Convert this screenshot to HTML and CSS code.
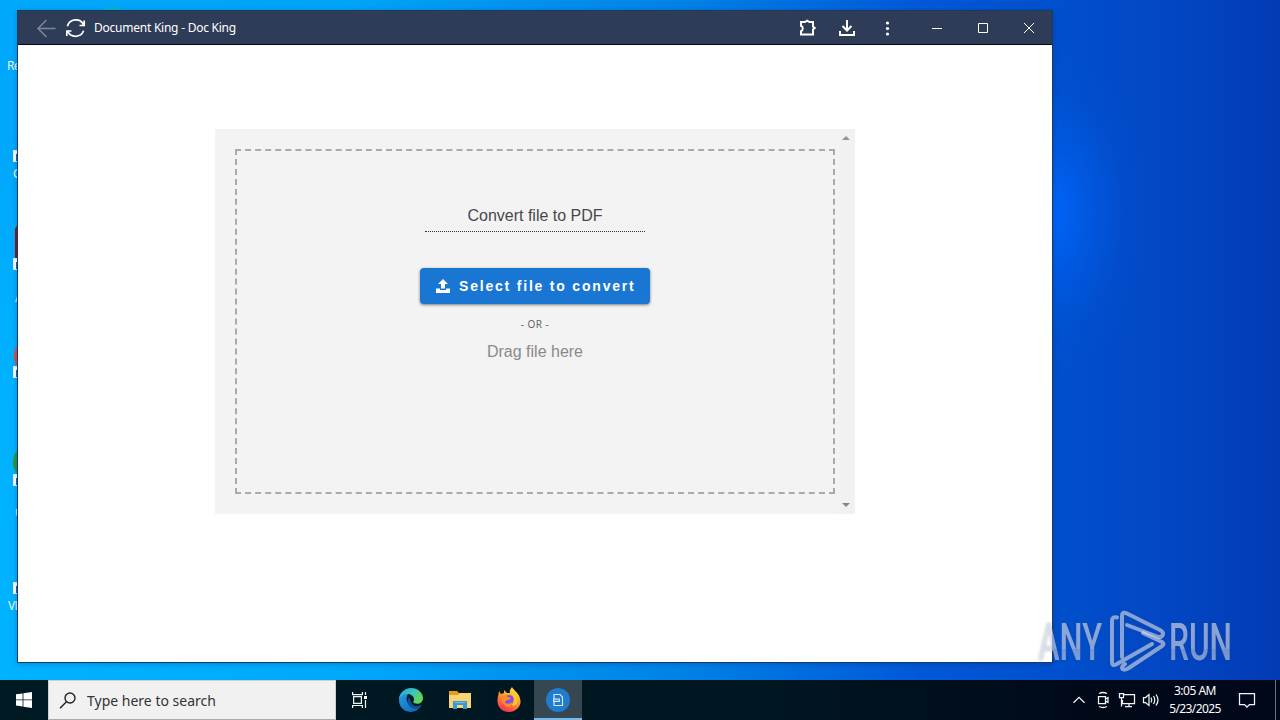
FILE: index.html
```html
<!DOCTYPE html>
<html lang="en">
<head>
<meta charset="utf-8">
<title>Document King - Doc King</title>
<link rel="stylesheet" href="styles.css">
</head>
<body>
<div class="screen">
  <main class="desktop">
    <span class="wallpaper-arc"></span>
    <span class="label label-recycle">Recycle</span>
    <span class="shortcut s1"></span><span class="label label-c">C</span>
    <span class="tile tile-red"></span><span class="shortcut s2"></span><span class="label label-a">A</span>
    <span class="tile tile-chrome"></span><span class="shortcut s3"></span>
    <span class="tile tile-green"></span><span class="shortcut s4"></span><span class="label label-d">u</span>
    <span class="shortcut s5"></span><span class="label label-vlc">VLC</span>

    <section class="window">
      <header class="titlebar">
        <svg class="back" width="20" height="20" viewBox="0 0 20 20"><path d="M19.500 10.500H2M10.500 2L2 10.500L10.500 19"/></svg>
        <svg class="reload" width="20" height="20" viewBox="0 0 20 20"><path d="M1.400 8.200A8.700 8.700 0 0 1 17.600 6.800M17.600 12.800A8.700 8.700 0 0 1 1.600 13.200M18.200 2.500V7.500H13.500M.8 18V13H5.500"/></svg>
        <span class="title">Document King - Doc King</span>
        <div class="tools">
          <svg width="20" height="20" viewBox="0 0 20 20"><path class="bold" d="M4 4H8L10.200 2.600L12.500 4H16V8.500L17.700 10L16 11.500V16.500H4V13.200C6.300 12.400 6.300 8.600 4 7.800Z"/></svg>
          <svg width="20" height="20" viewBox="0 0 20 20"><path class="bold" d="M10 2V12.500M5.500 8L10 12.500L14.500 8M3 13V17H17V13"/></svg>
          <svg width="20" height="20" viewBox="0 0 20 20"><g fill="#fff"><circle cx="10.500" cy="5" r="1.6"/><circle cx="10.500" cy="10.500" r="1.6"/><circle cx="10.500" cy="16" r="1.6"/></g></svg>
        </div>
        <div class="controls">
          <svg width="46" height="34" viewBox="0 0 46 34"><path d="M18 17.500H28"/></svg>
          <svg width="46" height="34" viewBox="0 0 46 34"><path d="M18.500 12.500H27.500V21.500H18.500Z"/></svg>
          <svg width="46" height="34" viewBox="0 0 46 34"><path d="M18 12L28 22M28 12L18 22"/></svg>
        </div>
      </header>
      <div class="page">
        <div class="panel">
          <div class="dropzone">
            <div class="heading"><span>Convert file to PDF</span></div>
            <button class="select">
              <svg width="14" height="14" viewBox="0 0 14 14"><path fill="#fff" d="M7 0L12 5H9V9.500H5V5H2ZM0 9.500H4V11H10V9.500H14V14H0Z"/></svg>
              <span>Select file to convert</span>
            </button>
            <div class="or">- OR -</div>
            <div class="drag">Drag file here</div>
          </div>
          <div class="scrollbar"><i class="up"></i><i class="down"></i></div>
        </div>
      </div>
    </section>

    <svg class="watermark" width="204" height="66" viewBox="0 0 204 66">
      <defs><linearGradient id="wm" x1="0" y1="0" x2="0" y2="1"><stop offset="0" stop-color="#dfe7f5" stop-opacity=".62"/><stop offset=".6" stop-color="#dfe7f5" stop-opacity=".58"/><stop offset=".61" stop-color="#dfe7f5" stop-opacity=".5"/><stop offset="1" stop-color="#dfe7f5" stop-opacity=".58"/></linearGradient></defs>
      <g class="wm-text" fill="url(#wm)">
        <text x="3" y="52" textLength="64" lengthAdjust="spacingAndGlyphs">ANY</text>
        <text x="134" y="52" textLength="63" lengthAdjust="spacingAndGlyphs">RUN</text>
      </g>
      <g class="wm-mark">
        <path d="M82 9.500Q77 8 77 13V54Q77 58.500 81 56.500L117 36"/>
        <path d="M87 49V8Q87 3 92 5.500L125 22Q130 25 127 28Q125 30 122 28.500L92 17"/>
        <path d="M108 25L127 34Q130 36 127 38L93 60.500Q88 63 87 60Q87 58 90 56"/>
      </g>
    </svg>
  </main>

  <footer class="taskbar">
    <div class="start"><svg width="16" height="16" viewBox="0 0 16 16"><path fill="#fff" d="M0 2.300L6.600 1.400V7.500H0ZM7.400 1.300L16 0V7.500H7.400ZM0 8.300H6.600V14.500L0 13.600ZM7.400 8.300H16V16L7.400 14.700Z"/></svg></div>
    <div class="search">
      <svg width="18" height="18" viewBox="0 0 18 18"><circle cx="11" cy="6" r="5"/><path d="M7.400 9.700L1 16.300"/></svg>
      <span>Type here to search</span>
    </div>
    <div class="apps">
      <div class="app"><svg width="18" height="18" viewBox="0 0 18 18" fill="none" stroke="#eef4f5" stroke-width="1.200"><path d="M1.600 1V3.600H11.400V1M2.600 5.600H10.400V12.400H2.600ZM1.600 17V14.500H11.400V17M14.500 1V4M14.500 9V17"/><path fill="#fff" stroke="none" d="M13 5H16V8H13Z"/></svg></div>
      <div class="app"><svg width="26" height="26" viewBox="0 0 26 26">
        <defs><linearGradient id="eg" x1="0" y1="0" x2="1" y2=".6"><stop offset="0" stop-color="#249edb"/><stop offset=".55" stop-color="#36c7bd"/><stop offset="1" stop-color="#67d64c"/></linearGradient><linearGradient id="eb" x1="0" y1="0" x2="1" y2="1"><stop offset="0" stop-color="#229ee6"/><stop offset="1" stop-color="#1063b3"/></linearGradient></defs>
        <path fill="url(#eb)" d="M1 13C1 6 6 4 11 6C7 9 8 18 14 19C18 20 21 19 23.500 18C20 24 15 25.500 11 24.800C5 24 1 19 1 13Z"/>
        <path fill="#0c4f9b" d="M11 10C8 14 10 21 17 22C20 22 22 20 23.500 18C19 20 14 19 13 15Z"/>
        <path fill="url(#eg)" d="M1 12C2 5 7 1 13 1C20 1 25 6 25 11C25 16 20 18 16 16C14.500 15 16 14 16 12C15 6 5 5 1 12Z"/>
      </svg></div>
      <div class="app"><svg width="22" height="20" viewBox="0 0 22 20"><path fill="#e89d18" d="M0 1H8L10 3H21V8H0Z"/><path fill="#f8d574" d="M0 5H9L11 3H22V18H0Z"/><path fill="#3997d7" d="M4 19V12Q4 11 5 11H17Q18 11 18 12V19H14V15H8V19Z"/><path fill="#72bce8" d="M6 12H16V13H6Z"/></svg></div>
      <div class="app"><svg width="26" height="26" viewBox="0 0 26 26">
        <defs><linearGradient id="ff" x1=".8" y1="0" x2=".3" y2="1"><stop offset="0" stop-color="#fff044"/><stop offset=".48" stop-color="#ff9a27"/><stop offset="1" stop-color="#f42e55"/></linearGradient></defs>
        <path fill="url(#ff)" d="M3 4L5 7L8 6L8 3L11 6L14 6C13 3 15 2 16 0C17 3 24 6 24.500 14C25 20 19 25 13 25C6 25 1 20 1.500 13C1.500 9 3 7 3 4Z"/>
        <circle cx="13" cy="13.500" r="5.500" fill="#8453db"/><path fill="#ff8a27" d="M5 10Q9 7 12 10L15 11Q14 13 11 13Q9 14 9 16Q13 18 17 15Q16 20 12 20Q6 18 5 10Z"/><path fill="#ffc62e" d="M15 5Q23 8 21 17Q18 20 16 18Q20 13 15 5Z"/>
      </svg></div>
      <div class="app active"><svg width="24" height="24" viewBox="0 0 24 24"><circle cx="12" cy="12" r="12" fill="#207ccd"/><path d="M8 6.500H14L16.500 9V17.500H8Z" fill="none" stroke="#cfe6f6" stroke-width="1.200"/><path d="M7 10.500H14V14H7Z" fill="#cfe6f6"/><path d="M8.200 12.200H13" stroke="#207ccd"/></svg></div>
    </div>
    <div class="tray">
      <svg width="24" height="24" viewBox="0 0 24 24"><path d="M6.500 14.700L12 9.300L17.500 14.700"/></svg>
      <svg width="24" height="24" viewBox="0 0 24 24"><path d="M7.500 8.500H14.500V15.500H7.500ZM14.500 11L17 9.500V14.500L14.500 13M8 5.500Q12 3.500 16 5.500M8 18.500Q12 20.500 16 18.500"/></svg>
      <svg width="24" height="24" viewBox="0 0 24 24"><path d="M9 6.500H19.500V15.500H7.500V12M4.500 5.500H8.500V9.500H4.500ZM6.500 9.500V18.500M14 15.500V18.500M10 18.500H17"/></svg>
      <svg width="24" height="24" viewBox="0 0 24 24"><path d="M4.500 9.500H6.500L10 6.500V17.500L6.500 14.500H4.500ZM12 9.500Q13.500 12 12 14.500M14.500 8Q17 12 14.500 16M17 6.500Q21 12 17 17.500"/></svg>
      <div class="clock"><span>3:05 AM</span><span class="date">5/23/2025</span></div>
      <svg class="notice" width="20" height="20" viewBox="0 0 20 20"><path d="M2.500 3.500H17.500V14.500H12.500L10 17L7.500 14.500H2.500Z"/></svg>
    </div>
  </footer>
</div>
</body>
</html>
```
FILE: styles.css
```css
* { box-sizing: border-box; }
body { margin: 0; font-family: "Noto Sans", sans-serif; }
svg { display: block; flex: none; }
.screen { width: 1280px; height: 720px; display: flex; flex-direction: column; overflow: hidden; }
.desktop {
  position: relative; height: 680px; overflow: hidden;
  background:
    radial-gradient(ellipse 110px 170px at 1046px 212px, rgba(0,104,255,.95) 0%, rgba(0,98,245,.5) 38%, rgba(0,88,228,.15) 72%, rgba(0,84,220,0) 100%),
    linear-gradient(90deg, #00a8fc 0, #00a4f8 350px, #0082e6 680px, #0058d8 920px, #0050cd 1052px, #0346c3 1170px, #023bb4 1280px);
}
.desktop::before { content: ""; position: absolute; inset: 0 auto 0 0; width: 500px; background: linear-gradient(90deg, #00b2ff, transparent); -webkit-mask-image: linear-gradient(transparent 20%, #000 60%); mask-image: linear-gradient(transparent 20%, #000 60%); }
.wallpaper-arc { position: absolute; left: 93px; top: 7px; width: 40px; height: 40px; border-radius: 50%; background: #08b5ca; }
.label { position: absolute; color: #e8f8ff; font-size: 12px; line-height: 16px; letter-spacing: -.6px; }
.label-recycle { left: 7px; top: 58px; }
.label-c { left: 13px; top: 166px; }
.label-a { left: 15px; top: 290px; }
.label-d { left: 15px; top: 504px; }
.label-vlc { left: 8px; top: 598px; }
.shortcut { position: absolute; left: 13px; width: 12px; height: 12px; background: #fff; border: 1px solid #dceefa; }
.shortcut::after { content: ""; position: absolute; left: 2px; top: 3px; width: 5px; height: 5px; border: solid #1769b4; border-width: 2px 0 0 2px; }
.s1 { top: 150px; } .s2 { top: 258px; } .s3 { top: 366px; } .s4 { top: 474px; } .s5 { top: 582px; }
.tile { position: absolute; }
.tile-red { left: 15px; top: 225px; width: 30px; height: 36px; border-radius: 5px; background: #951414; }
.tile-chrome { left: 14px; top: 338px; width: 36px; height: 36px; border-radius: 50%; background: #e54a45; }
.tile-green { left: 13px; top: 444px; width: 36px; height: 36px; border-radius: 50%; background: #279a3e; }
.window { position: absolute; left: 17px; top: 10px; width: 1036px; height: 653px; background: #fff; border: 1px solid #193b62; display: flex; flex-direction: column; box-shadow: 0 1px 5px rgba(0,20,70,.25); }
.titlebar { height: 34px; flex: none; background: #2f3c58; border-bottom: 1px solid #05080f; display: flex; align-items: center; padding-left: 18px; color: #fff; }
.titlebar svg { fill: none; stroke: #fff; stroke-width: 1; }
.titlebar .back { stroke: #7d879b; stroke-width: 1.5; }
.titlebar .reload { stroke-width: 1.7; margin-left: 10px; }
.title { font-size: 12px; line-height: 18px; width: 144px; margin-left: 8px; white-space: nowrap; letter-spacing: -.24px; }
.tools { margin-left: auto; display: flex; gap: 20px; margin-right: 17px; }
.tools svg { stroke: none; }
.tools .bold { stroke: #fff; stroke-width: 2; }
.controls { display: flex; }
.page { flex: 1; display: flex; align-items: flex-start; justify-content: center; padding-top: 84px; }
.panel { width: 640px; height: 385px; background: #f3f3f3; display: flex; padding: 20px 0 20px 20px; }
.dropzone { width: 600px; height: 345px; border: 2px dashed #aaa; display: flex; flex-direction: column; align-items: center; padding-top: 53px; font-family: "Liberation Sans", sans-serif; }
.heading { width: 220px; height: 28px; border-bottom: 1px dotted #333; text-align: center; color: #48484c; font-size: 16px; line-height: 23px; white-space: nowrap; }
.select { width: 230px; height: 36px; margin-top: 36px; padding: 0 0 0 16px; border: 0; border-radius: 4px; background: #1976d2; color: #fff; display: flex; align-items: center; gap: 9px; font: 700 14px/20px "Liberation Sans", sans-serif; letter-spacing: 1.8px; white-space: nowrap; box-shadow: 0 1px 3px rgba(0,0,0,.5); }
.or { margin-top: 12px; font: 10px/16px "Noto Sans", sans-serif; color: #666; letter-spacing: .5px; }
.drag { margin-top: 9px; font-size: 16px; line-height: 22px; color: #8a8a8a; }
.scrollbar { width: 16px; height: 385px; margin: -20px 0 0 4px; background: #f1f1f1; display: flex; flex-direction: column; justify-content: space-between; align-items: center; padding: 7px 2px 7px 0; }
.scrollbar i { border: 4px solid transparent; }
.scrollbar .up { border-top: 0; border-bottom-color: #949494; }
.scrollbar .down { border-bottom: 0; border-top-color: #858585; }
.watermark { position: absolute; left: 1035px; top: 608px; overflow: visible; filter: drop-shadow(0 0 1.5px rgba(60,60,80,.45)); }
.wm-text { font: 500 52px Roboto, sans-serif; }
.wm-mark { fill: none; stroke: #dfe7f5; stroke-opacity: .58; stroke-width: 4; stroke-linejoin: round; stroke-linecap: round; }
.taskbar { position: relative; height: 40px; display: flex; background: linear-gradient(90deg, #001a24, #001620 60%, #000918 85%, #000819); color: #fff; }
.taskbar::after { content: ""; position: absolute; right: 4px; top: 0; width: 1px; height: 40px; background: #68717e; }
.start { width: 48px; display: flex; align-items: center; justify-content: center; }
.search { width: 288px; background: #f1f1f1; border: 1px solid #cfcfcf; border-bottom-color: #aaa; display: flex; align-items: center; padding: 2px 0 0 10px; gap: 10px; color: #333; font: 14px/20px "Noto Sans", sans-serif; }
.search svg { fill: none; stroke: #222; stroke-width: 1.4; }
.apps { display: flex; }
.app { width: 49px; height: 40px; display: flex; align-items: center; justify-content: center; padding-right: 2px; }
.app:nth-child(2) { width: 51px; padding-right: 0; }
.app.active { width: 48px; padding: 2px 0 0; background: #354750; border-bottom: 2px solid #76b9ed; }
.tray { margin-left: auto; display: flex; align-items: center; padding-right: 23px; }
.tray svg { fill: none; stroke: #f4f5f7; stroke-width: 1.25; }
.clock { width: 64px; display: flex; flex-direction: column; text-align: center; font-size: 12px; line-height: 18px; letter-spacing: -.5px; }
.clock .date { letter-spacing: -.6px; }
.tray .notice { margin-left: 10px; }
```
